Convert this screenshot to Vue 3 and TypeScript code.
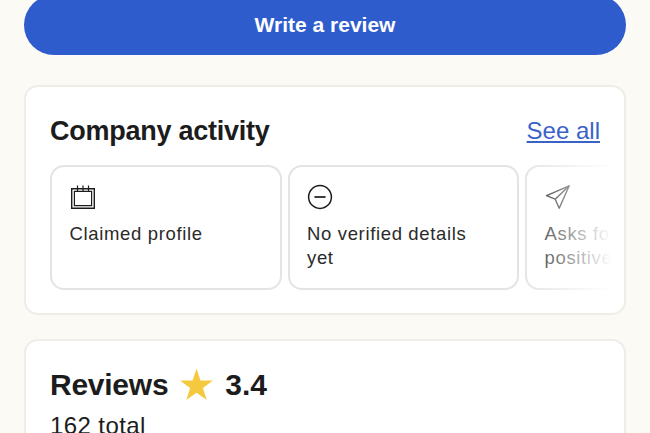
<template>
  <main class="page">
    <button class="write-btn" type="button">Write a review</button>

    <section class="card activity">
      <header class="activity-head">
        <h2>Company activity</h2>
        <a class="see-all" href="#">See all</a>
      </header>

      <div class="tiles-wrap">
        <div class="tiles">
          <article class="tile">
            <svg class="icon" viewBox="0 0 26 26" fill="none" stroke="#1c1c1c" stroke-width="1.4">
              <path d="M1.700 4.700h22.600v19.600H1.700z" />
              <path d="M4.400 7.400h17.200v14.200H4.400z" stroke-width="1.2" />
              <path d="M7.500 1.500v6M13 1.500v6M18.500 1.500v6" stroke-width="1.2" />
            </svg>
            <p>Claimed profile</p>
          </article>
          <article class="tile">
            <svg class="icon" viewBox="0 0 26 26" fill="none" stroke="#1c1c1c" stroke-width="1.5">
              <circle cx="13" cy="13" r="11.400" />
              <path d="M7.400 13h11.200" stroke-width="1.700" />
            </svg>
            <p>No verified details yet</p>
          </article>
          <article class="tile">
            <svg class="icon" viewBox="0 0 26 26" fill="none" stroke="#1c1c1c" stroke-width="1.4" stroke-linejoin="round">
              <path d="M24.200 1.800 1.600 11.600l8.600 3.600 4 9z" />
              <path d="M24.200 1.800 10.200 15.200" />
            </svg>
            <p>Asks for<br />positive reviews</p>
          </article>
        </div>
        <div class="fade"></div>
      </div>
    </section>

    <section class="card reviews">
      <div class="score">
        <h2 class="reviews-title">Reviews</h2>
        <svg class="star" viewBox="0 0 34 33">
          <path d="M17 .5l4.100 12.300 12.900.1-10.400 7.700 3.900 12.400L17 25.400 6.500 32.900l3.900-12.400L0 12.900l12.900-.1z" fill="#f5c93f" />
        </svg>
        <span class="rating">3.4</span>
      </div>
      <p class="total">162 total</p>
    </section>
  </main>
</template>

<script setup lang="ts">
// static page section
</script>

<style>
html,
body {
  margin: 0;
  background: #fbfaf4;
}
</style>

<style scoped>
.page {
  height: 433px;
  overflow: hidden;
  box-sizing: border-box;
  padding: 0 24px;
  background: #fbfaf4;
  font-family: "Liberation Sans", Arial, sans-serif;
  color: #1c1c1c;
}

.write-btn {
  display: block;
  width: 100%;
  height: 60px;
  margin: -5px 0 30px;
  border: 0;
  border-radius: 30px;
  background: #2f5ccd;
  color: #fff;
  font: 700 21px "Liberation Sans", Arial, sans-serif;
}

.card {
  box-sizing: border-box;
  background: #fff;
  border: 2px solid #eeede7;
  border-radius: 14px;
}

.activity {
  height: 230px;
  padding: 24px 0 0 24px;
  margin-bottom: 24px;
}

.activity-head {
  display: flex;
  align-items: center;
  justify-content: space-between;
  padding-right: 24px;
  height: 40px;
  margin-bottom: 14px;
}

h2 {
  margin: 0;
  font-size: 27px;
  font-weight: 700;
  letter-spacing: -0.25px;
}

.reviews-title {
  font-size: 30px;
}

.see-all {
  color: #3a62c9;
  font-size: 24px;
}

.tiles-wrap {
  position: relative;
  overflow: hidden;
  margin-right: 8px;
}

.tiles {
  display: flex;
  gap: 6px;
}

.tile {
  flex: 0 0 231.5px;
  box-sizing: border-box;
  height: 125px;
  padding: 17px 30px 0 17.5px;
  border: 2px solid #e4e4e6;
  border-radius: 14px;
}

.tile p {
  margin: 12px 0 0;
  font-size: 18.5px;
  line-height: 24px;
  letter-spacing: 0.65px;
  color: #2a2a2a;
}

.icon {
  display: block;
  width: 26px;
  height: 26px;
}

.fade {
  position: absolute;
  top: 0;
  right: 0;
  bottom: 0;
  width: 95px;
  background: linear-gradient(90deg, rgba(255, 255, 255, 0), #fff 95%);
}

.reviews {
  height: 140px;
  padding: 24px 24px 0;
}

.score {
  display: flex;
  align-items: center;
  gap: 12px;
  height: 40px;
}

.star {
  width: 33px;
  height: 32px;
  margin-top: -2px;
}

.rating {
  font-size: 30px;
  font-weight: 700;
}

.total {
  margin: 7px 0 0;
  font-size: 24px;
  letter-spacing: 0.4px;
}
</style>
